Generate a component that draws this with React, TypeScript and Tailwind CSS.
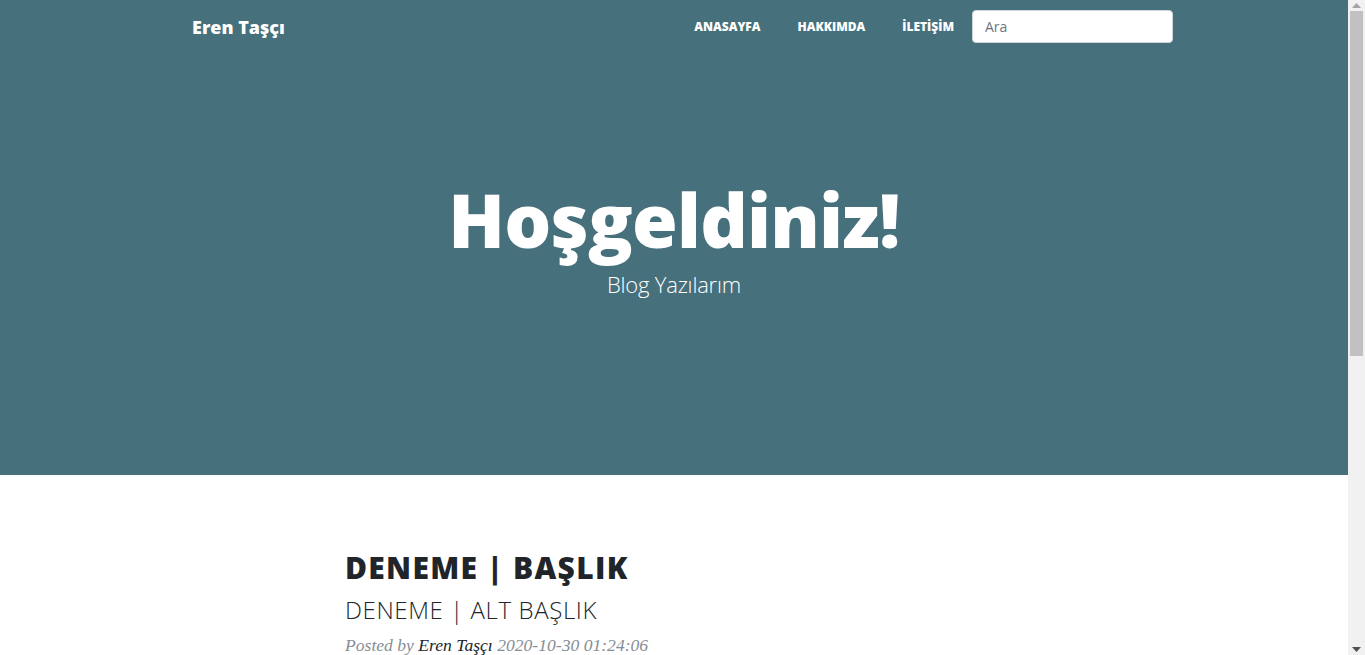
import React from "react";

const sans = { fontFamily: '"Open Sans", "Liberation Sans", sans-serif' } as const;
const serif = { fontFamily: '"Liberation Serif", "DejaVu Serif", serif' } as const;

function FakeScrollbar() {
  return (
    <div className="w-[17px] h-[655px] bg-[#f1f1f1] flex flex-col items-center shrink-0">
      <div className="h-[11px] w-full flex items-center justify-center">
        <svg width="9" height="5" viewBox="0 0 9 5"><path d="M4.5 0 L9 5 L0 5 Z" fill="#a3a3a3" /></svg>
      </div>
      <div className="w-[13px] h-[345px] bg-[#c1c1c1]" />
      <div className="flex-1" />
      <div className="h-[11px] w-full flex items-center justify-center">
        <svg width="9" height="5" viewBox="0 0 9 5"><path d="M0 0 L9 0 L4.5 5 Z" fill="#505050" /></svg>
      </div>
    </div>
  );
}

export default function App() {
  return (
    <div className="w-[1365px] h-[655px] overflow-hidden flex bg-white" style={sans}>
      <div className="w-[1348px] shrink-0 flex flex-col">
        <header className="h-[475px] shrink-0 bg-[#46707c] flex flex-col">
          <nav className="h-[54px] shrink-0 flex items-center pl-[192px] pr-[175px]">
            <a className="text-white text-[18px] font-extrabold leading-none">Eren Taşçı</a>
            <div className="flex-1" />
            <ul className="flex items-center gap-[37px] mr-[18px]">
              {["ANASAYFA", "HAKKIMDA", "İLETİŞİM"].map((t) => (
                <li key={t} className="text-white text-[12px] font-extrabold leading-none">
                  {t}
                </li>
              ))}
            </ul>
            <input
              placeholder="Ara"
              className="w-[201px] h-[33px] -mt-[1px] bg-white rounded-[4px] border border-[#ced4da] px-[12px] text-[14px] text-[#495057] placeholder:text-[#6c757d] outline-none"
              style={sans}
            />
          </nav>
          <div className="pt-[129px] flex flex-col items-center text-white">
            <h1 className="text-[74px] font-extrabold leading-none tracking-[-0.8px]">Hoşgeldiniz!</h1>
            <span className="mt-[15px] text-[22px] font-light leading-[1.1] tracking-[-0.2px]">Blog Yazılarım</span>
          </div>
        </header>
        <main className="pl-[345px] pt-[75px]">
          <h2 className="text-[30px] font-extrabold leading-[1.2] text-[#212529] tracking-[1.3px]">DENEME | BAŞLIK</h2>
          <h3 className="mt-[10px] text-[24px] font-light leading-[1.2] text-[#212529] tracking-[0.6px]">DENEME | ALT BAŞLIK</h3>
          <p className="mt-[10px] text-[17.6px] italic text-[#868e96] leading-[1.2]" style={serif}>
            Posted by <span className="text-[#212529]">Eren Taşçı</span> 2020-10-30 01:24:06
          </p>
        </main>
      </div>
      <FakeScrollbar />
    </div>
  );
}
